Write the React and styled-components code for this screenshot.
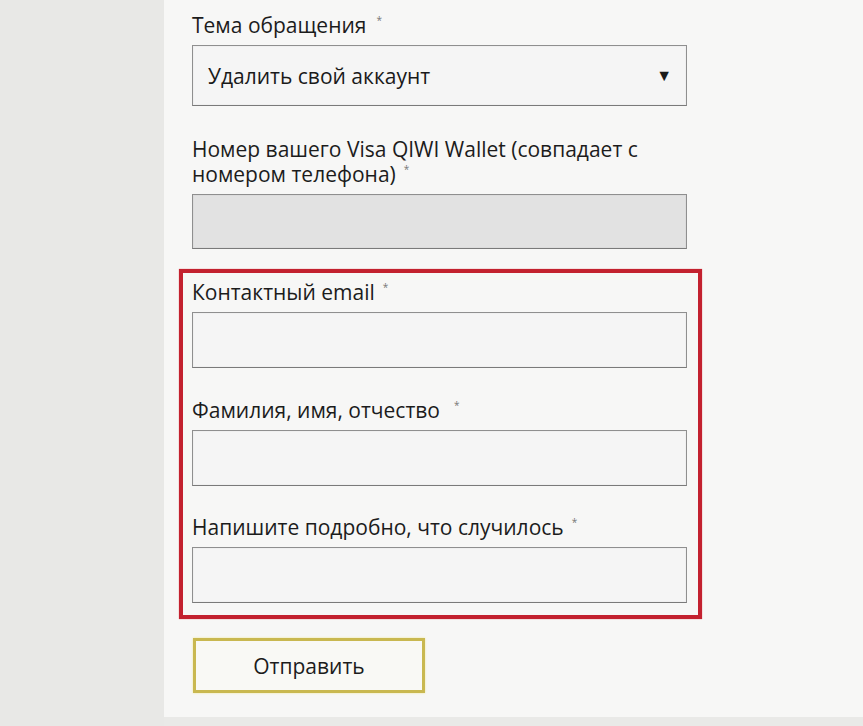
import React from "react";
import styled, { createGlobalStyle } from "styled-components";

const Global = createGlobalStyle`
  html, body { margin: 0; padding: 0; }
  body {
    background: #e9e9e7;
    font-family: "Open Sans", "Noto Sans", sans-serif;
    color: #1c1c1c;
  }
`;

const Page = styled.div`
  display: flex;
  width: 863px;
  height: 726px;
  overflow: hidden;
`;

const Side = styled.div`
  width: 164px;
  flex: none;
  background: #e8e8e6;
`;

const Main = styled.div`
  flex: 1;
  height: 717px;
  background: #f7f7f6;
  padding: 13px 0 0 28px;
  box-sizing: border-box;
`;

const Form = styled.div`
  width: 495px;
  display: flex;
  flex-direction: column;
`;

const Field = styled.div`
  display: flex;
  flex-direction: column;
  gap: 7px;
  margin-bottom: ${(p) => p.$mb ?? 31}px;
`;

const Label = styled.div`
  font-size: 21px;
  line-height: 25px;
  color: #1c1c1c;
`;

const Star = styled.span`
  display: inline-block;
  font-size: 10px;
  line-height: 10px;
  color: #777;
  vertical-align: top;
  margin-top: 2px;
  margin-left: ${(p) => p.$gap ?? 8}px;
`;

const Box = styled.div`
  box-sizing: border-box;
  height: ${(p) => p.$h ?? 56}px;
  border: 1px solid #8f8f8f;
  border-bottom-color: #7a7a7a;
  background: ${(p) => (p.$disabled ? "#e2e2e2" : "#f5f5f5")};
  box-shadow: inset 0 0 0 1px ${(p) => (p.$disabled ? "#dcdcdc" : "#f0f0f0")};
`;

const Select = styled(Box)`
  display: flex;
  align-items: center;
  justify-content: space-between;
  padding: 0 14px 0 15px;
  font-size: 21px;
  color: #1a1a1a;
`;

const Arrow = styled.span`
  font-size: 16px;
  color: #1a1a1a;
  margin-top: -2px;
`;

const Highlight = styled.div`
  margin: 0 -15px 0 -13px;
  border: 4px solid #c3212f;
  padding: 7px 11px 12px 9px;
  display: flex;
  flex-direction: column;
  box-shadow: 0 0 1px #e06a72;
`;

const Submit = styled.button`
  margin: 19px 0 0 1px;
  width: 232px;
  height: 55px;
  box-sizing: border-box;
  border: 3px solid #c9b850;
  background: #f9f9f5;
  font-family: inherit;
  font-size: 21px;
  color: #1c1c1c;
  box-shadow: 0 0 2px #f1ea9a;
  cursor: pointer;
`;

export default function App() {
  return (
    <>
      <Global />
      <Page>
        <Side />
        <Main>
          <Form>
            <Field>
              <Label>
                Тема обращения<Star $gap={10}>*</Star>
              </Label>
              <Select $h={61}>
                <span>Удалить свой аккаунт</span>
                <Arrow>▼</Arrow>
              </Select>
            </Field>
            <Field $mb={20}>
              <Label>
                Номер вашего Visa QIWI Wallet (совпадает с номером телефона)
                <Star>*</Star>
              </Label>
              <Box $h={55} $disabled />
            </Field>
            <Highlight>
              <Field $mb={30}>
                <Label>
                  Контактный email<Star>*</Star>
                </Label>
                <Box />
              </Field>
              <Field $mb={29}>
                <Label>
                  Фамилия, имя, отчество<Star $gap={14}>*</Star>
                </Label>
                <Box />
              </Field>
              <Field $mb={0}>
                <Label>
                  Напишите подробно, что случилось<Star>*</Star>
                </Label>
                <Box />
              </Field>
            </Highlight>
            <Submit>Отправить</Submit>
          </Form>
        </Main>
      </Page>
    </>
  );
}
